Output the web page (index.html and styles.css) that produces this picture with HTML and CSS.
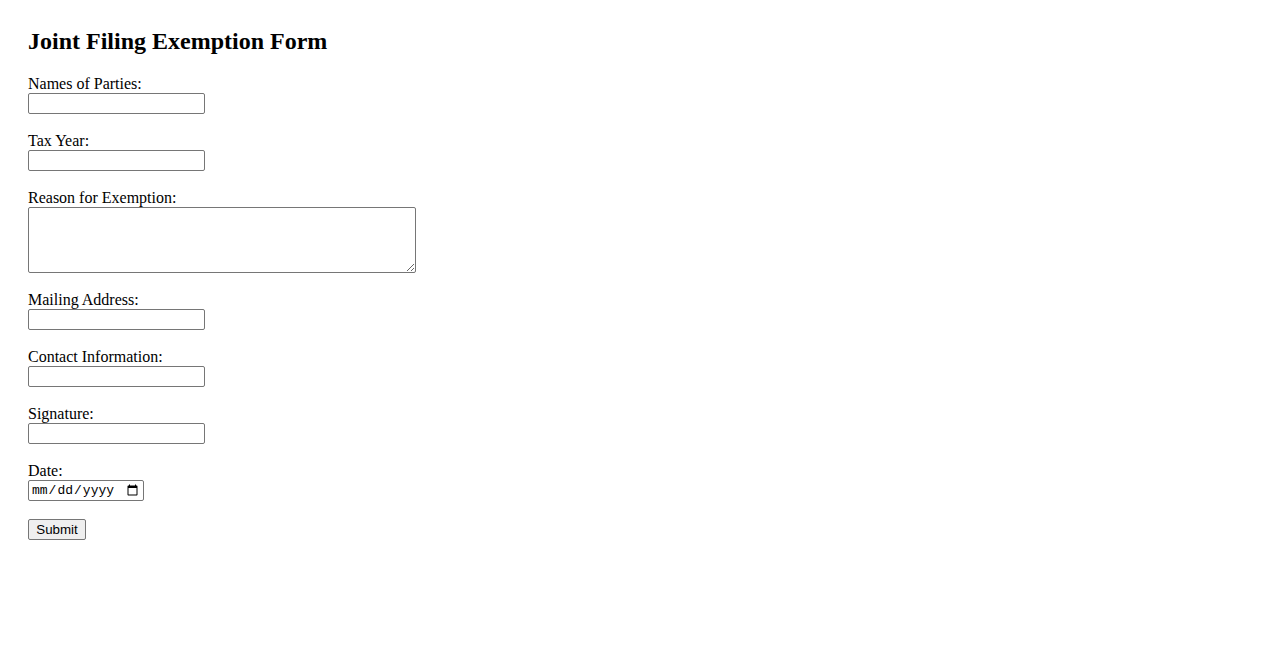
FILE: index.html
```html
<!DOCTYPE html>
<html lang="en">
<head>
<meta charset="utf-8">
<title>Joint Filing Exemption Form</title>
<link rel="stylesheet" href="styles.css">
</head>
<body>
<h2 class="title">Joint Filing Exemption Form</h2>
<form class="form">
  <div class="field">
    <label class="label" for="names">Names of Parties:</label>
    <input class="text-input" type="text" id="names">
  </div>
  <div class="field">
    <label class="label" for="year">Tax Year:</label>
    <input class="text-input" type="text" id="year">
  </div>
  <div class="field">
    <label class="label" for="reason">Reason for Exemption:</label>
    <textarea class="text-area" id="reason"></textarea>
  </div>
  <div class="field">
    <label class="label" for="address">Mailing Address:</label>
    <input class="text-input" type="text" id="address">
  </div>
  <div class="field">
    <label class="label" for="contact">Contact Information:</label>
    <input class="text-input" type="text" id="contact">
  </div>
  <div class="field">
    <label class="label" for="signature">Signature:</label>
    <input class="text-input" type="text" id="signature">
  </div>
  <div class="field">
    <label class="label" for="date">Date:</label>
    <input class="date-input" type="date" id="date">
  </div>
  <button class="submit" type="submit">Submit</button>
</form>
</body>
</html>
```

FILE: styles.css
```css
html, body {
  background: #ffffff;
}
body {
  margin: 0;
  padding: 27px 28px 28px 28px;
  font-family: "Liberation Serif", "Times New Roman", serif;
  font-size: 16px;
  color: #000000;
}
.title {
  margin: 0 0 20px 0;
  font-size: 24px;
  font-weight: bold;
  line-height: 28px;
}
.form {
  display: flex;
  flex-direction: column;
  align-items: flex-start;
}
.field {
  display: flex;
  flex-direction: column;
  align-items: flex-start;
  margin-bottom: 18px;
}
.label {
  display: block;
  height: 18px;
  line-height: 18px;
}
.text-input,
.text-area,
.date-input {
  box-sizing: border-box;
  margin: 0;
  border: 1px solid #767676;
  border-radius: 2px;
  background: #ffffff;
  font-family: "Liberation Sans", Arial, sans-serif;
  font-size: 13.33px;
  padding: 1px 2px;
}
.text-input {
  width: 177px;
  height: 21px;
}
.text-area {
  width: 388px;
  height: 66px;
  resize: vertical;
}
.date-input {
  width: 116px;
  height: 21px;
  font-family: "Liberation Mono", "Courier New", monospace;
  font-size: 13px;
}
.submit {
  box-sizing: border-box;
  margin: 0;
  height: 21px;
  width: 58px;
  padding: 1px 6px;
  border: 1px solid #767676;
  border-radius: 2px;
  background: #efefef;
  color: #000000;
  font-family: "Liberation Sans", Arial, sans-serif;
  font-size: 13.33px;
  line-height: 15px;
}
```
